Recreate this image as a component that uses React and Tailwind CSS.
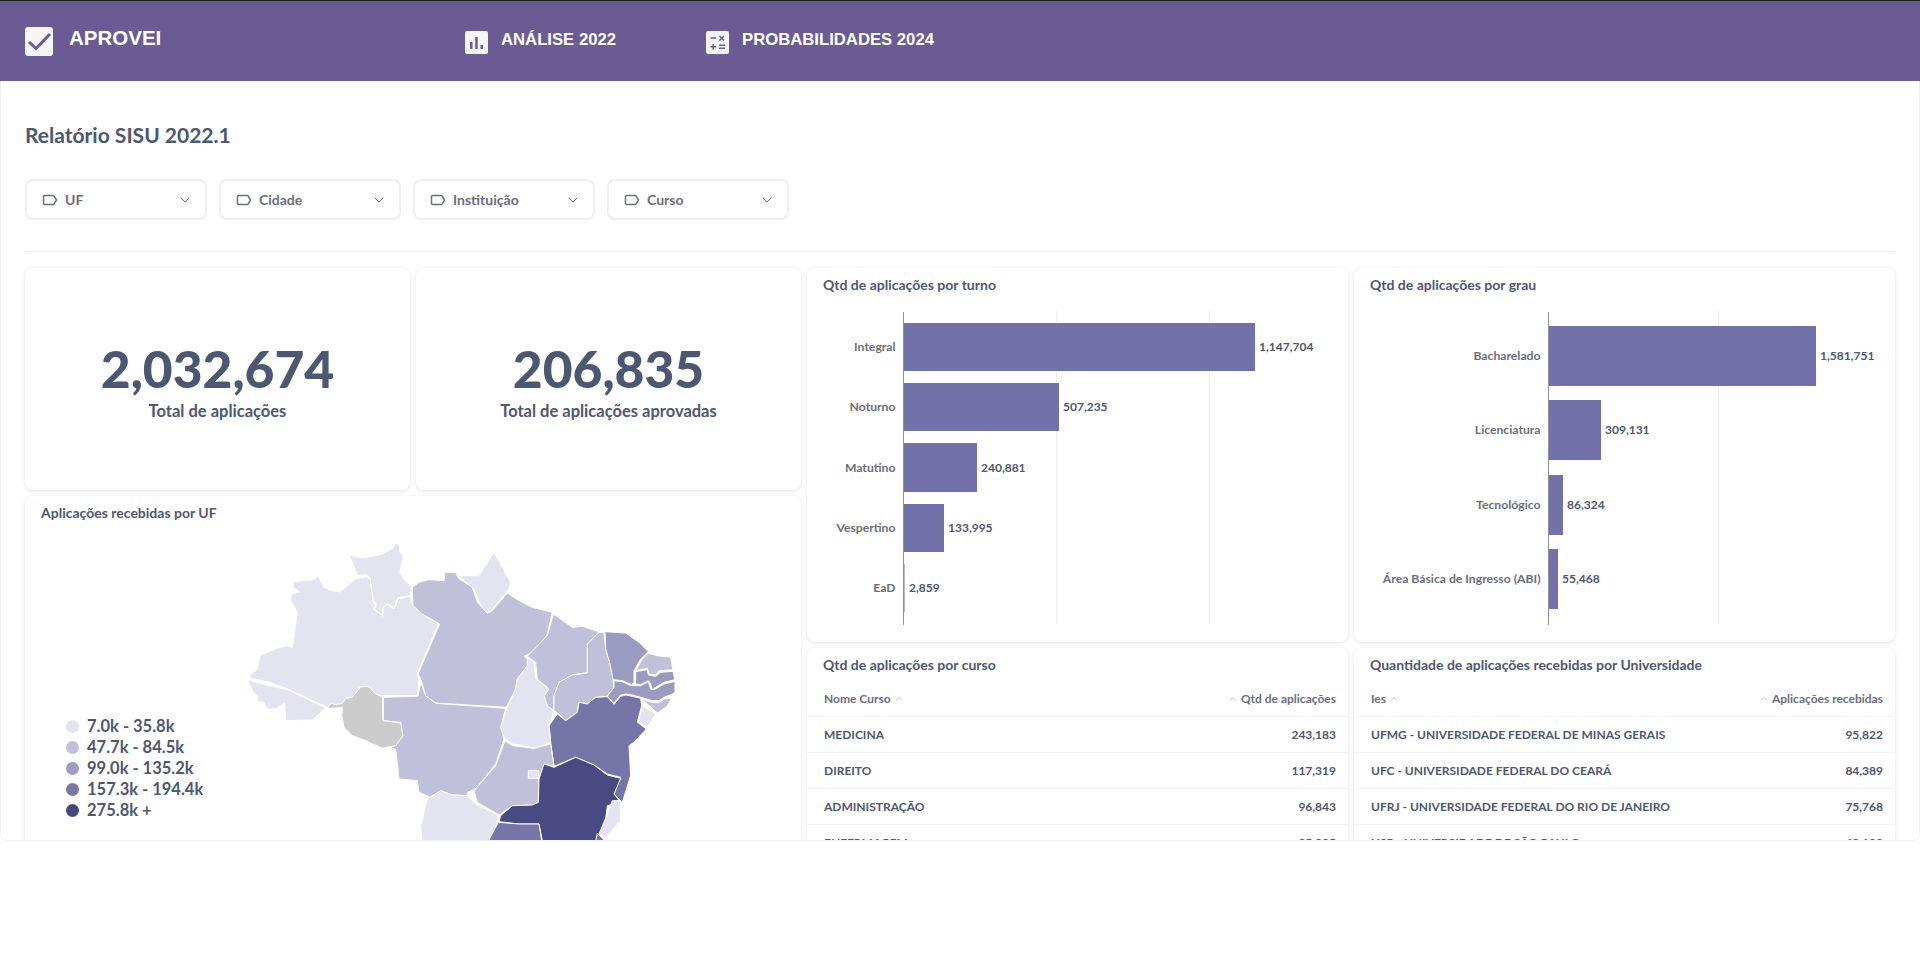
import { ChevronDown, ChevronUp } from 'lucide-react'

const LIGHT = '#e4e4f0'
const MID = '#c0c0da'
const DARK = '#9b9ac0'
const DEEP = '#7675a7'
const NAVY = '#4a4a82'

const states = [
  [LIGHT, '223,188 280,183 297,172 315,205 337,215 357,217 360,220 410,180 440,173 453,180 463,250 470,260 463,270 492,292 492,267 505,257 525,270 537,240 575,232 578,255 605,280 658,315 595,463 600,485 595,530 487,530 470,525 450,503 425,503 400,535 380,538 370,555 325,565 207,510 150,490 93,477 90,470 115,450 123,410 175,387 205,380 220,385 235,280 215,245 217,225 243,220 223,205'],
  [LIGHT, '87,483 150,500 207,512 320,567 280,603 200,605 197,552 170,570 145,570 135,550 115,548 117,530 103,520'],
  [LIGHT, '390,107 425,117 455,113 490,105 523,87 530,72 543,80 540,95 553,110 543,160 553,180 577,203 575,230 537,235 525,267 505,253 490,265 490,288 467,270 473,255 463,245 453,175 440,167 415,170 403,137'],
  [LIGHT, '718,170 780,170 825,100 875,190 870,210 820,270 805,282 790,270 765,210'],
  [MID, '580,205 600,190 630,182 675,185 678,160 710,160 718,178 760,205 775,250 805,283 820,275 865,222 900,245 940,265 1000,280 985,345 950,395 915,412 930,425 925,440 895,480 890,510 862,565 650,552 620,530 605,480 597,465 662,315 610,285 582,260'],
  [MID, '1003,285 1060,325 1090,322 1140,338 1105,375 1105,460 1060,468 1020,490 1005,530 1005,575 985,560 975,530 990,510 955,480 950,430 925,412 985,350'],
  [MID, '1140,340 1155,340 1160,390 1172,430 1182,482 1185,505 1165,532 1130,535 1105,555 1080,550 1075,580 1040,605 1020,585 1005,575 1005,530 1020,490 1060,468 1105,462 1105,375'],
  [DARK, '1158,338 1220,342 1260,370 1288,398 1265,420 1245,455 1245,490 1238,497 1210,485 1182,482 1172,430 1160,390'],
  [MID, '1288,403 1315,410 1355,415 1362,452 1320,455 1310,468 1290,465 1285,448 1250,455 1270,420'],
  [DARK, '1250,458 1285,452 1288,468 1310,472 1325,460 1362,457 1368,482 1335,490 1310,505 1300,512 1295,495 1288,485 1265,497 1250,495'],
  [DARK, '1185,485 1210,488 1235,500 1265,500 1288,488 1296,512 1310,510 1335,495 1368,487 1368,522 1335,535 1320,545 1300,545 1265,535 1240,528 1220,525 1205,528 1185,553 1165,532 1185,505'],
  [MID, '1265,540 1300,550 1320,550 1335,540 1358,537 1345,562 1315,582 1285,555'],
  [LIGHT, '1270,560 1310,585 1285,625 1258,610'],
  [DEEP, '1165,533 1185,556 1205,532 1220,528 1240,532 1265,538 1268,560 1255,610 1282,630 1245,670 1230,680 1235,770 1210,850 1185,825 1205,775 1165,765 1125,738 1070,715 1005,742 995,670 990,620 1015,585 1040,605 1075,580 1080,550 1105,555 1130,535'],
  [LIGHT, '925,415 945,430 950,480 990,510 975,530 985,560 1005,580 990,615 995,670 945,688 915,680 880,675 855,655 845,625 862,570 890,510 895,480 925,440'],
  [MID, '493,535 597,532 605,490 620,530 650,553 860,568 845,625 855,660 830,735 770,810 745,820 745,830 700,828 665,815 635,835 600,820 595,785 540,780 530,690 515,688 550,650 545,610 493,605'],
  ['#cccccc', '325,567 337,552 347,557 370,553 380,538 400,535 425,503 450,503 470,525 490,533 492,605 545,612 552,650 530,680 490,688 440,665 400,650 375,625 368,590 370,565 345,568'],
  [MID, '858,665 880,680 945,688 995,675 1005,742 975,735 960,780 958,850 940,858 880,860 840,888 775,850 765,815 830,740'],
  [LIGHT, '928,755 960,755 960,778 928,778'],
  [NAVY, '1005,745 1070,715 1125,738 1165,768 1205,778 1185,825 1205,850 1165,860 1160,900 1130,990 975,990 960,915 900,915 840,908 845,890 880,860 940,858 958,850 960,780 975,735'],
  [LIGHT, '1180,845 1205,845 1205,905 1160,955 1140,945 1165,885'],
  [LIGHT, '610,990 605,920 625,840 665,815 700,828 745,830 770,855 840,890 835,908 808,990'],
  [DEEP, '795,990 838,910 900,915 960,915 972,990'],
  [DEEP, '1125,990 1135,942 1180,990'],
]

const legend = [
  ['#e4e4f0', '7.0k - 35.8k'],
  ['#c1c0dc', '47.7k - 84.5k'],
  ['#9c9bc1', '99.0k - 135.2k'],
  ['#7877a8', '157.3k - 194.4k'],
  ['#474780', '275.8k +'],
]

const turno = [
  ['Integral', '1,147,704', 323, 48, 351],
  ['Noturno', '507,235', 383, 48, 155],
  ['Matutino', '240,881', 443, 49, 73],
  ['Vespertino', '133,995', 504, 48, 40],
  ['EaD', '2,859', 564, 48, 1],
]

const grau = [
  ['Bacharelado', '1,581,751', 326, 60, 267],
  ['Licenciatura', '309,131', 400, 60, 52],
  ['Tecnológico', '86,324', 475, 60, 14],
  ['Área Básica de Ingresso (ABI)', '55,468', 549, 60, 9],
]

const cursos = [
  ['MEDICINA', '243,183'],
  ['DIREITO', '117,319'],
  ['ADMINISTRAÇÃO', '96,843'],
  ['ENFERMAGEM', '85,885'],
]

const universidades = [
  ['UFMG - UNIVERSIDADE FEDERAL DE MINAS GERAIS', '95,822'],
  ['UFC - UNIVERSIDADE FEDERAL DO CEARÁ', '84,389'],
  ['UFRJ - UNIVERSIDADE FEDERAL DO RIO DE JANEIRO', '75,768'],
  ['USP - UNIVERSIDADE DE SÃO PAULO', '68,188'],
]

function Card({ title, children, className = '' }) {
  return (
    <div className={`bg-white rounded-lg shadow-[0_1px_4px_rgba(0,0,0,0.12)] ${className}`}>
      {title && <h3 className="px-[16px] pt-[7px] h-[34px] leading-[20px] text-[14px] font-bold text-[#4c5773] whitespace-nowrap">{title}</h3>}
      {children}
    </div>
  )
}

function Stat({ value, label }) {
  return (
    <Card className="h-[222px] flex flex-col items-center pt-[69px]">
      <div className="text-[51.5px] leading-[62px] font-black text-[#4c5773]">{value}</div>
      <div className="text-[16.5px] leading-[24px] font-bold text-[#4c5773]">{label}</div>
    </Card>
  )
}

// chart coordinates are page pixels, the svg is shifted by the card's origin
function BarChart({ rows, left, axis, grid }) {
  const top = 302
  return (
    <svg width="541" height="336" viewBox={`${left} ${top} 541 336`} className="block">
      {grid.map(x => <line key={x} x1={x} x2={x} y1="311" y2="624" stroke="#ededf0" />)}
      <line x1={axis} x2={axis} y1="312" y2="625" stroke="#8c8fa3" />
      {rows.map(([name, value, y, h, w]) => (
        <g key={name}>
          <rect x={axis + 0.5} y={y} width={w} height={h} fill={w < 2 ? '#b5b4d2' : '#7271aa'} />
          <text x={axis - 8} y={y + h / 2 + 4} textAnchor="end" className="text-[12.2px] font-bold fill-[#696e7b]">{name}</text>
          <text x={axis + w + 4.5} y={y + h / 2 + 4} className="text-[12px] font-bold fill-[#4c5773]">{value}</text>
        </g>
      ))}
    </svg>
  )
}

function DataTable({ title, nameCol, valueCol, rows }) {
  return (
    <Card title={title} className="h-[300px]">
      <div className="flex justify-between items-center h-[35px] pl-[17px] pr-[12px] text-[12px] border-b border-[#f3f3f5]">
        <span className="flex items-center">
          <span className="text-[#696e7b] font-bold">{nameCol}</span>
          <ChevronUp size={12} strokeWidth={1.5} className="ml-[2px] text-[#a9acb6]" />
        </span>
        <span className="flex items-center gap-[2px]">
          <ChevronUp size={12} strokeWidth={1.5} className="text-[#a9acb6]" />
          <span className="text-[#696e7b] font-bold">{valueCol}</span>
        </span>
      </div>
      {rows.map(([name, value]) => (
        <div key={name} className="flex justify-between items-center h-[36px] pl-[17px] pr-[12px] text-[12px] font-bold text-[#4c5773] border-b border-[#f3f3f5]">
          <span>{name}</span>
          <span>{value}</span>
        </div>
      ))}
    </Card>
  )
}

function FilterButton({ label }) {
  return (
    <div className="w-[182px] h-[41px] flex items-center pl-[15px] pr-[12px] rounded-lg border-2 border-[#eeeeef] bg-white text-[#696e7b]">
      <svg width="16" height="16" viewBox="0 0 16 16" fill="none" stroke="currentColor" strokeWidth="1.5" className="shrink-0">
        <path d="M1.500 4.500a1 1 0 0 1 1-1h8.700a1 1 0 0 1 .8.400l2.500 4.100-2.500 4.100a1 1 0 0 1-.8.400H2.500a1 1 0 0 1-1-1z" strokeLinejoin="round" />
      </svg>
      <span className="ml-[7px] text-[14px] font-bold">{label}</span>
      <ChevronDown size={16} strokeWidth={1.5} className="ml-auto" />
    </div>
  )
}

function NavItem({ icon, label, className }) {
  return (
    <div className={`flex items-center ${className}`}>
      {icon}
      <span className="ml-[13px] mt-[-2px] text-[16.7px] font-bold text-white">{label}</span>
    </div>
  )
}

export default function App() {
  return (
    <div className="font-['Lato',sans-serif] bg-white min-h-[968px]">
      <header className="h-[81px] bg-[#6b5b95] border-t border-[#1f1f22] flex items-center font-['Liberation_Sans',sans-serif]">
        <div className="flex items-center pl-[25px] w-[465px]">
          <svg width="28" height="29" viewBox="0 0 28 29" className="shrink-0 mt-[1px]">
            <rect width="28" height="29" rx="3" fill="#f5f5f5" />
            <path d="M4 15l7 6.500L25 7" fill="none" stroke="#6b5b95" strokeWidth="3" />
          </svg>
          <span className="ml-[16px] text-[20.5px] font-bold text-white mt-[-5px]">APROVEI</span>
        </div>
        <NavItem
          className="w-[241px]"
          label="ANÁLISE 2022"
          icon={
            <svg width="23" height="23" viewBox="0 0 23 23" className="shrink-0 mt-[2px]">
              <rect width="23" height="23" rx="2" fill="#f5f5f5" />
              <path d="M5 11h2.500v7H5zM10.200 6h2.500v12h-2.500zM15.500 14H18v4h-2.500z" fill="#6b5b95" />
            </svg>
          }
        />
        <NavItem
          label="PROBABILIDADES 2024"
          icon={
            <svg width="23" height="23" viewBox="0 0 23 23" className="shrink-0 mt-[2px]">
              <rect width="23" height="23" rx="2" fill="#f5f5f5" />
              <path d="M4.500 7h5.500M7.200 13v5.500M4.500 15.700H10M13 14.300h6M13 17.200h6" stroke="#6b5b95" strokeWidth="1.600" fill="none" />
              <path d="M13.500 5l4.500 4.500M18 5l-4.500 4.500" stroke="#6b5b95" strokeWidth="1.600" fill="none" />
            </svg>
          }
        />
      </header>

      <main className="h-[760px] overflow-hidden rounded-b-lg border border-t-0 border-[#eeeeef] px-[24px]">
        <h1 className="pt-[41px] text-[21px] leading-[26px] font-bold text-[#4c5773]">Relatório SISU 2022.1</h1>
        <div className="flex gap-[12px] mt-[31px]">
          <FilterButton label="UF" />
          <FilterButton label="Cidade" />
          <FilterButton label="Instituição" />
          <FilterButton label="Curso" />
        </div>
        <div className="h-px bg-[#eeeeef] mt-[31px] mb-[16px]" />

        <div className="flex gap-[6px] items-start">
          <div className="w-[776px] shrink-0 flex flex-col gap-[6px]">
            <div className="grid grid-cols-[385px_385px] gap-[6px]">
              <Stat value="2,032,674" label="Total de aplicações" />
              <Stat value="206,835" label="Total de aplicações aprovadas" />
            </div>
            <Card title="Aplicações recebidas por UF" className="h-[500px]">
              <div className="flex items-start">
                <div className="w-[194px] shrink-0 pl-[41px] pt-[186px] flex flex-col">
                  {legend.map(([color, label]) => (
                    <div key={label} className="flex items-center h-[21px] whitespace-nowrap">
                      <span className="w-[13px] h-[13px] rounded-full shrink-0" style={{ background: color }} />
                      <span className="ml-[8px] text-[16.5px] font-bold text-[#4c5773]">{label}</span>
                    </div>
                  ))}
                </div>
                <svg width="480" height="340" viewBox="0 0 1440 1020" className="block shrink-0 mt-[-11px]">
                  {states.map(([fill, points]) => (
                    <polygon key={points} points={points} fill={fill} stroke="#ffffff" strokeWidth="3" strokeLinejoin="round" />
                  ))}
                </svg>
              </div>
            </Card>
          </div>

          <div className="grid grid-cols-[541px_541px] gap-[6px]">
            <Card title="Qtd de aplicações por turno" className="h-[374px]">
              <BarChart rows={turno} left={807} axis={903.5} grid={[1056.5, 1209.5]} />
            </Card>
            <Card title="Qtd de aplicações por grau" className="h-[374px]">
              <BarChart rows={grau} left={1354} axis={1548.5} grid={[1718.5]} />
            </Card>
            <DataTable title="Qtd de aplicações por curso" nameCol="Nome Curso" valueCol="Qtd de aplicações" rows={cursos} />
            <DataTable title="Quantidade de aplicações recebidas por Universidade" nameCol="Ies" valueCol="Aplicações recebidas" rows={universidades} />
          </div>
        </div>
      </main>
    </div>
  )
}
